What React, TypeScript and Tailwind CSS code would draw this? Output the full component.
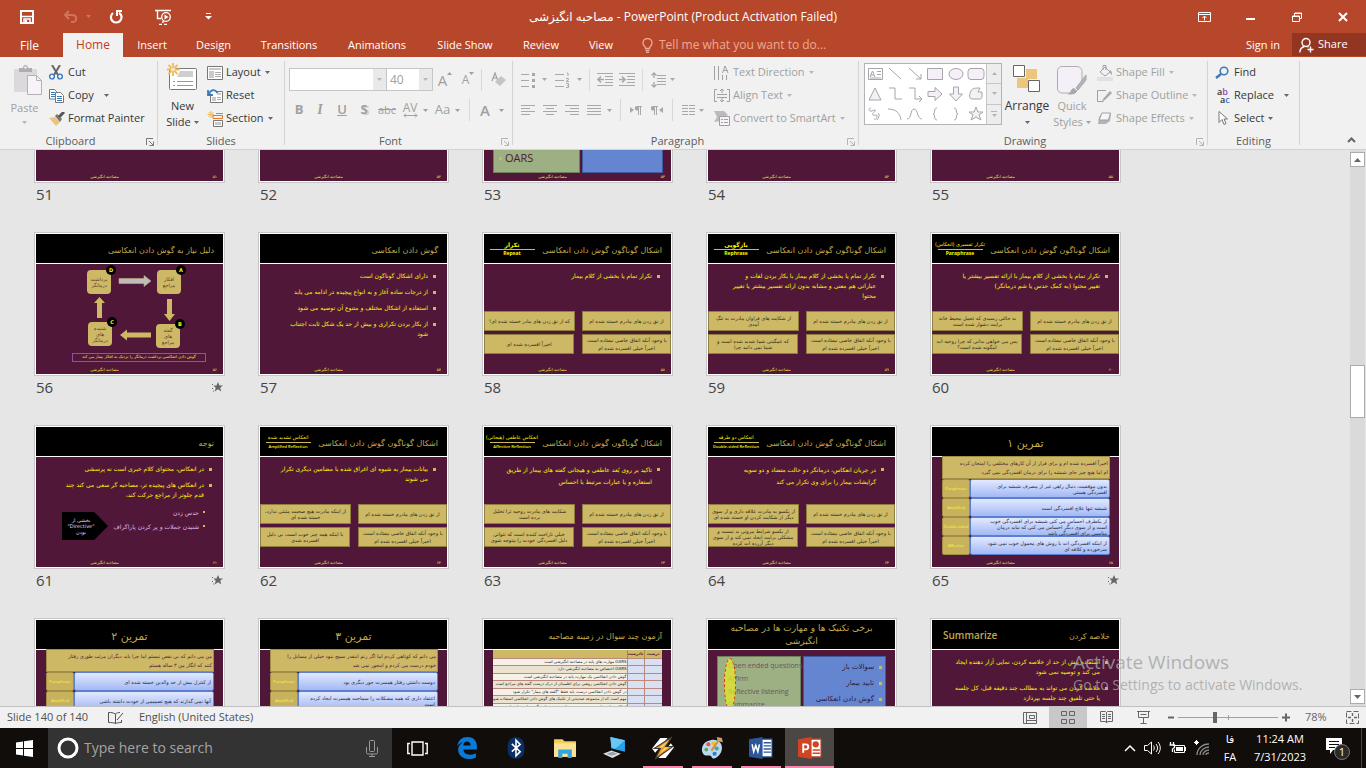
import { ReactNode } from 'react';

const SLIDE_FONT = "font-['DejaVu_Sans','Noto_Sans',sans-serif]";
const FOOTER = 'مصاحبه انگیزشی';

/* ---------- small helpers ---------- */

interface SvgProps {
  w: number;
  h: number;
  children: ReactNode;
  className?: string;
}

function Svg({ w, h, children, className = '' }: SvgProps) {
  return (
    <svg
      width={w}
      height={h}
      viewBox={`0 0 ${w} ${h}`}
      fill="none"
      stroke="currentColor"
      className={`shrink-0 ${className}`}
      aria-hidden="true"
    >
      {children}
    </svg>
  );
}

function Caret({ className = '' }: { className?: string }) {
  return (
    <Svg w={5} h={3} className={className}>
      <path d="M0 0h5L2.5 3z" fill="currentColor" stroke="none" />
    </Svg>
  );
}

function CaretButton({ label, className = '' }: { label: string; className?: string }) {
  return (
    <button aria-label={label} className={`flex w-2 items-center justify-center ${className}`}>
      <Caret />
    </button>
  );
}

function Tool({ label, className = 'w-[22px]', children }: { label: string; className?: string; children: ReactNode }) {
  return (
    <button aria-label={label} className={`flex shrink-0 items-center justify-center ${className}`}>
      {children}
    </button>
  );
}

function Divider({ className = '' }: { className?: string }) {
  return <span className={`h-[22px] w-px shrink-0 bg-[#d8d8d8] ${className}`} />;
}

/* ---------- title bar + tabs ---------- */

function TitleBar() {
  return (
    <header className="grid h-[33px] shrink-0 grid-cols-[1fr_auto_1fr] items-center">
      <div className="flex items-center pl-5">
        <button aria-label="Save">
          <Svg w={14} h={14}>
            <path d="M1 1h12v12H1z" strokeWidth="2" />
            <path d="M2 6.500h10M4 13v-4h6v4" strokeWidth="1.500" />
            <path d="M5 10h2v3H5z" fill="currentColor" stroke="none" />
          </Svg>
        </button>
        <button aria-label="Undo" className="ml-[29px] text-[#d0745d]">
          <Svg w={15} h={13}>
            <path d="M6 1L2 5l4 4M2 5h7c6 0 5 7 1 7H8" strokeWidth="2" />
          </Svg>
        </button>
        <Caret className="ml-2 text-[#d0745d]" />
        <button aria-label="Redo" className="ml-[18px]">
          <Svg w={14} h={14}>
            <path d="M4 3a5.300 5.300 0 1 0 6-.3" strokeWidth="2.200" />
            <path d="M7 1h6M8 0v6" strokeWidth="2" />
          </Svg>
        </button>
        <button aria-label="Start From Beginning" className="ml-8">
          <Svg w={17} h={16}>
            <path d="M0 1.500h16M2.500 2v7.500H6M8 12v2M4 15.500h3M9 15.500h3" strokeWidth="1.400" />
            <circle cx="11" cy="8" r="4.300" strokeWidth="1.300" />
            <path d="M9.500 5.500v5l4-2.500z" fill="currentColor" stroke="none" />
          </Svg>
        </button>
        <button aria-label="Customize Quick Access Toolbar" className="ml-[33px]">
          <Svg w={7} h={7}>
            <path d="M1 .5h5" />
            <path d="M0 3h7L3.500 6.500z" fill="currentColor" stroke="none" />
          </Svg>
        </button>
      </div>
      <h1 className="text-xs">مصاحبه انگیزشی - PowerPoint (Product Activation Failed)</h1>
      <div className="flex items-center justify-end">
        <button aria-label="Ribbon Display Options" className="flex w-[46px] justify-center">
          <Svg w={13} h={10}>
            <path d="M.5.5h12v9H.5zM.5 2.500h12M6.500 8.500V4.500M4.500 6l2-2 2 2" />
          </Svg>
        </button>
        <button aria-label="Minimize" className="flex w-[46px] justify-center">
          <Svg w={9} h={10}>
            <path d="M0 7h9" strokeWidth="2" />
          </Svg>
        </button>
        <button aria-label="Restore Down" className="flex w-[47px] justify-center">
          <Svg w={10} h={10}>
            <path d="M.5 4h7v5.500h-7zM.5 4.500h7M2.500 4V1h7v5.500h-2M2.500 1.500h7" />
          </Svg>
        </button>
        <button aria-label="Close" className="flex w-[46px] justify-center">
          <Svg w={10} h={10}>
            <path d="M1 1l8 8M9 1L1 9" strokeWidth="2" />
          </Svg>
        </button>
      </div>
    </header>
  );
}

const TABS = [
  { name: 'Insert', width: 'w-[58px]' },
  { name: 'Design', width: 'w-[65px]' },
  { name: 'Transitions', width: 'w-[86px]' },
  { name: 'Animations', width: 'w-[90px]' },
  { name: 'Slide Show', width: 'w-[86px]' },
  { name: 'Review', width: 'w-[66px]' },
  { name: 'View', width: 'w-[54px]' },
];

function TabBar() {
  return (
    <nav className="flex h-6 shrink-0 text-[11px]">
      <button className="w-[59px] pt-px text-xs">File</button>
      <button className="ml-1 w-[60px] bg-[#f1f1f1] text-xs text-[#c43e1c]">Home</button>
      {TABS.map((tab) => (
        <button key={tab.name} className={`whitespace-nowrap ${tab.width}`}>
          {tab.name}
        </button>
      ))}
      <button className="ml-[14px] flex items-center gap-1.5 text-xs text-[#eda996]">
        <Svg w={11} h={15}>
          <path d="M3.500 10.500C3.500 8 1 8 1 5a4.500 4.500 0 0 1 9 0c0 3-2.500 3-2.500 5.500zM3.500 12.500h4M4 14.500h3" strokeWidth="1.300" />
        </Svg>
        Tell me what you want to do...
      </button>
      <button className="ml-auto w-14 pl-0.5">Sign in</button>
      <button className="mb-px ml-0.5 flex w-[74px] items-center gap-1 bg-[#923622] pl-[7px]">
        <Svg w={15} h={16}>
          <circle cx="7" cy="5.500" r="4" strokeWidth="1.400" />
          <path d="M.8 15.500C1 12 3 10 5.500 9.500M8.500 9.500l1 .5M11.500 9.500v6M8.500 12.500h6" strokeWidth="1.400" />
        </Svg>
        Share
      </button>
    </nav>
  );
}

/* ---------- ribbon ---------- */

interface GroupProps {
  label: string;
  className: string;
  launcher?: 'on' | 'off';
  children: ReactNode;
}

function Group({ label, className, launcher, children }: GroupProps) {
  return (
    <>
      <section className={`flex shrink-0 flex-col pt-1 ${className}`}>
        <div className="flex h-[72px]">{children}</div>
        <div className="flex h-4 items-center">
          <h2 className="flex-1 text-center text-[11px] text-[#5c5c5c]">{label}</h2>
          {launcher && (
            <button
              aria-label={`${label} settings`}
              className={`flex w-4 justify-end pt-0.5 pr-[3px] ${launcher === 'on' ? 'text-[#777]' : 'text-[#b4b4b4]'}`}
            >
              <Svg w={8} h={8}>
                <path d="M.5 7V.5H7M3 3l4 4M7.500 3.500v4h-4" />
              </Svg>
            </button>
          )}
        </div>
      </section>
      <span className="my-1 w-px shrink-0 bg-[#d4d4d4]" />
    </>
  );
}

function RibbonItem({ icon, text, caret, off }: { icon: ReactNode; text: string; caret?: string; off?: boolean }) {
  return (
    <button className={`flex h-[23px] items-center whitespace-nowrap ${off ? 'text-[#a0a0a0]' : 'text-[#363636]'}`}>
      <span className="flex w-[19px] items-center">{icon}</span>
      {text}
      {caret && <Caret className={`${caret} ${off ? 'text-[#b8b8b8]' : 'text-[#666]'}`} />}
    </button>
  );
}

const lines = (ys: number[], x1: number, x2: number) => ys.map((y) => `M${x1} ${y}H${x2}`).join('');

function Clipboard() {
  return (
    <Group label="Clipboard" className="w-[157px]" launcher="on">
      <button className="flex w-[49px] flex-col items-center pt-1 text-[#a0a0a0]">
        <Svg w={30} h={31} className="ml-1.5">
          <path d="M1 4h23v23H1z" fill="#dcd9dc" stroke="none" />
          <path d="M6 3h4c0-4 5-4 5 0h4v4H6z" fill="#adadad" stroke="none" />
          <circle cx="12.500" cy="2.500" r="1.200" fill="#f1f1f1" stroke="none" />
          <path d="M14.500 10.500h9l5 5v14h-14z" fill="#f7f3f9" stroke="#b5b0b7" />
          <path d="M23.500 10.500v5h5" stroke="#b5b0b7" />
        </Svg>
        <span className="mt-1 leading-4">Paste</span>
        <Caret className="mt-[5px] text-[#b8b8b8]" />
      </button>
      <div className="flex flex-col">
        <RibbonItem
          text="Cut"
          icon={
            <Svg w={14} h={15}>
              <path d="M3 0l6 10M11 0L5 10" stroke="#666" strokeWidth="2" />
              <circle cx="3" cy="11.500" r="2.400" stroke="#3d7ab8" strokeWidth="1.400" />
              <circle cx="11" cy="11.500" r="2.400" stroke="#3d7ab8" strokeWidth="1.400" />
            </Svg>
          }
        />
        <RibbonItem
          text="Copy"
          caret="ml-[10px]"
          icon={
            <Svg w={15} h={14}>
              <path d="M.5.5h5l2 2V10h-7z" fill="#fff" stroke="#777" />
              <path d={lines([3.5, 5.5, 7.5], 2, 6)} stroke="#3d7ab8" />
              <path d="M6.500 3.500h5l3 3v7h-8z" fill="#fff" stroke="#777" />
              <path d={lines([7.5, 9.5, 11.5], 8, 13)} stroke="#3d7ab8" />
            </Svg>
          }
        />
        <RibbonItem
          text="Format Painter"
          icon={
            <Svg w={16} h={14}>
              <path d="M0 6l6-1 5 5-4 4z" fill="#ecc47c" stroke="none" />
              <path d="M6 4l2-2 5 5-2 3z" fill="#777" stroke="none" />
              <path d="M10 5l5-5" stroke="#555" strokeWidth="3" />
            </Svg>
          }
        />
      </div>
    </Group>
  );
}

function Slides() {
  return (
    <Group label="Slides" className="w-[126px]">
      <button className="flex w-[49px] flex-col items-center pt-0.5 text-[#363636]">
        <Svg w={31} h={28}>
          <rect x="2.500" y="5.500" width="27" height="21" rx="1" fill="#fff" stroke="#777" />
          <path d="M13 8h13v6H10z" fill="#cfcfcf" stroke="none" />
          <path d="M6 18.500h2M10 18.500h16M6 22.500h2M10 22.500h16" stroke="#999" />
          <path d="M6 0v13M0 6.500h12.500M1.500 2l9 9M10.500 2l-9 9" stroke="#efbb5c" strokeWidth="1.800" />
          <circle cx="6" cy="6.500" r="2.500" fill="#f8e6c0" stroke="#efbb5c" />
        </Svg>
        <span className="mt-[7px] leading-4">New</span>
        <span className="flex items-center gap-[3px] leading-4">
          Slide <Caret className="text-[#666]" />
        </span>
      </button>
      <div className="flex flex-col">
        <RibbonItem
          text="Layout"
          caret="ml-1"
          icon={
            <Svg w={16} h={14}>
              <path d="M.5.5h15v13H.5z" fill="#fff" stroke="#777" />
              <path d="M2 2h12v2H2zM2 5h5v7H2z" fill="#c9c9c9" stroke="none" />
              <path d={lines([6.5, 8.5, 10.5], 8, 14)} stroke="#aaa" />
            </Svg>
          }
        />
        <RibbonItem
          text="Reset"
          icon={
            <Svg w={16} h={14}>
              <path d="M3.500 4.500V13.500h12v-11h-6" fill="#fff" stroke="#777" />
              <path d="M5 8h4v4H5zM10 4h4v2h-4z" fill="#c9c9c9" stroke="none" />
              <path d={lines([8.5, 10.5], 10, 14)} stroke="#aaa" />
              <path d="M1 1v5h5M1.500 5.500C4 0 8 0 10.500 4" stroke="#3d7ab8" strokeWidth="1.800" />
            </Svg>
          }
        />
        <RibbonItem
          text="Section"
          caret="ml-1"
          icon={
            <Svg w={16} h={16}>
              <path d="M4 0v7M.5 3.500H7M1.500 1l5 5M6.500 1l-5 5" stroke="#efbb5c" />
              <path d="M9 2.500h7M6 4.500h9.500v3H6z" stroke="#e8762c" />
              <path d="M6.500 9.500h9v6h-9z" fill="#fff" stroke="#777" />
              <path d="M8 11h6v3H8z" fill="#c9c9c9" stroke="none" />
            </Svg>
          }
        />
      </div>
    </Group>
  );
}

function FontGroup() {
  return (
    <Group label="Font" className="w-[227px]" launcher="off">
      <div className="pt-[7px] pl-1 text-[#a0a0a0]">
        <div className="flex h-[23px] items-center">
          <div className="flex h-[23px] w-[98px] border border-[#c6c6c6] bg-white">
            <input aria-label="Font" className="w-0 flex-1 px-1 outline-none" />
            <button aria-label="Font list" className="flex w-[13px] items-center justify-center bg-[#e9e9e9] text-[#b8b8b8]">
              <Caret />
            </button>
          </div>
          <div className="flex h-[23px] w-[46px] border border-l-0 border-[#c6c6c6] bg-white">
            <input aria-label="Font size" defaultValue="40" className="w-0 flex-1 pl-[3px] text-xs outline-none" />
            <button aria-label="Font size list" className="flex w-[13px] items-center justify-center bg-[#e9e9e9] text-[#b8b8b8]">
              <Caret />
            </button>
          </div>
          <Tool label="Increase Font Size" className="w-6">
            <span className="text-[15px] leading-5">A</span>
            <Svg w={5} h={3} className="-mt-3">
              <path d="M0 3h5L2.500 0z" fill="currentColor" stroke="none" />
            </Svg>
          </Tool>
          <Tool label="Decrease Font Size">
            <span className="text-xs leading-5">A</span>
            <Caret className="-mt-3" />
          </Tool>
          <Divider className="ml-0.5" />
          <Tool label="Clear All Formatting" className="ml-[5px] w-[22px]">
            <Svg w={15} h={15}>
              <path d="M1 9L4 1l3 8M2 6h4" strokeWidth="1.200" />
              <path d="M4 10l6-6 5 4-6 6z" fill="#c4c4c4" stroke="none" />
            </Svg>
          </Tool>
        </div>
        <div className="mt-2 flex h-[22px] items-center text-[13px]">
          <Tool label="Bold" className="w-5">
            <b>B</b>
          </Tool>
          <Tool label="Italic">
            <i className="font-['Liberation_Serif',serif] text-sm font-bold">I</i>
          </Tool>
          <Tool label="Underline">
            <span className="font-semibold underline">U</span>
          </Tool>
          <Tool label="Text Shadow">
            <b className="[text-shadow:2px_1px_1px_#ccc]">S</b>
          </Tool>
          <Tool label="Strikethrough" className="w-6">
            <s className="text-[11px]">abc</s>
          </Tool>
          <Tool label="Character Spacing" className="w-[22px] flex-col">
            <span className="text-xs leading-[10px]">AV</span>
            <Svg w={15} h={5}>
              <path d="M1 2.500h13M3 .5l-2 2 2 2M12 .5l2 2-2 2" />
            </Svg>
          </Tool>
          <CaretButton label="Character Spacing options" />
          <Tool label="Change Case" className="ml-[3px] w-[21px]">
            Aa
          </Tool>
          <CaretButton label="Change Case options" />
          <Divider className="ml-2" />
          <Tool label="Font Color" className="ml-[5px] w-5">
            <span className="text-[15px] font-semibold">A</span>
          </Tool>
          <CaretButton label="Font Color options" className="ml-0.5" />
        </div>
      </div>
    </Group>
  );
}

function Paragraph() {
  return (
    <Group label="Paragraph" className="w-[345px]" launcher="off">
      <div className="w-[201px] pt-[7px] pl-1 text-[#a8a8a8]">
        <div className="flex h-[23px] items-center">
          <Tool label="Bullets">
            <Svg w={14} h={16}>
              <path d={lines([2.5, 8.5, 14.5], 0, 8)} />
              <path d="M11 1h3v3h-3zM11 7h3v3h-3zM11 13h3v3h-3z" fill="currentColor" stroke="none" />
            </Svg>
          </Tool>
          <CaretButton label="Bullets options" className="ml-px" />
          <Tool label="Numbering" className="ml-[3px] w-[22px]">
            <Svg w={15} h={16}>
              <path d={lines([2.5, 8.5, 14.5], 0, 9)} />
              <path d="M12 1h1v3M11 6.500h2.500v1L11 9.500h3M11 11.500h2.500v4H11M12 13.500h1.500" />
            </Svg>
          </Tool>
          <CaretButton label="Numbering options" className="ml-0.5" />
          <Divider className="ml-1.5" />
          <Tool label="Decrease List Level" className="ml-[5px] w-5">
            <Svg w={16} h={13}>
              <path d="M0 .5h16M8 3.500h8M8 6.500h8M8 9.500h8M0 12.500h16" />
              <path d="M7 6.500H1M4 3.500l-3 3 3 3" strokeWidth="1.600" />
            </Svg>
          </Tool>
          <Tool label="Increase List Level" className="ml-0.5 w-5">
            <Svg w={16} h={13}>
              <path d="M0 .5h16M8 3.500h8M8 6.500h8M8 9.500h8M0 12.500h16" />
              <path d="M0 6.500h6M3 3.500l3 3-3 3" strokeWidth="1.600" />
            </Svg>
          </Tool>
          <Divider className="ml-[5px]" />
          <Tool label="Line Spacing" className="ml-1.5 w-[18px]">
            <Svg w={15} h={16}>
              <path d={lines([3.5, 6.5, 9.5, 12.5], 6, 15)} />
              <path d="M3 1v5M.5 3.500L3 1l2.500 2.500M3 10v5M.5 12.500L3 15l2.500-2.500" strokeWidth="1.300" />
            </Svg>
          </Tool>
          <CaretButton label="Line Spacing options" className="ml-px" />
        </div>
        <div className="mt-2 flex h-[22px] items-center">
          <Tool label="Align Left">
            <Svg w={14} h={11}>
              <path d="M0 .5h14M0 3.500h9M0 6.500h14M0 9.500h9" />
            </Svg>
          </Tool>
          <Tool label="Center">
            <Svg w={14} h={11}>
              <path d="M0 .5h14M3 3.500h8M0 6.500h14M3 9.500h8" />
            </Svg>
          </Tool>
          <Tool label="Align Right">
            <Svg w={14} h={11}>
              <path d="M0 .5h14M5 3.500h9M0 6.500h14M5 9.500h9" />
            </Svg>
          </Tool>
          <Tool label="Justify">
            <Svg w={14} h={11}>
              <path d="M0 .5h14M0 3.500h14M0 6.500h14M0 9.500h14" />
            </Svg>
          </Tool>
          <CaretButton label="Justify options" />
          <Divider className="ml-[7px]" />
          <Tool label="Left-to-Right" className="ml-1.5 w-[18px]">
            <Svg w={12} h={9}>
              <path d="M0 1l4 3-4 3zM8 0h-1a2 2 0 0 0 0 4.500h1z" fill="currentColor" stroke="none" />
              <path d="M7 .5h5M8.500 0v9M10.500 0v9" />
            </Svg>
          </Tool>
          <Tool label="Right-to-Left" className="ml-[3px] w-[18px]">
            <Svg w={12} h={9}>
              <path d="M12 1L8 4l4 3zM3 0H2a2 2 0 0 0 0 4.500h1z" fill="currentColor" stroke="none" />
              <path d="M2 .5h5M3.500 0v9M5.500 0v9" />
            </Svg>
          </Tool>
          <Divider className="ml-1.5" />
          <Tool label="Columns" className="ml-1.5 w-[18px]">
            <Svg w={13} h={11}>
              <path d={lines([0.5, 3.5, 6.5, 9.5], 0, 6) + lines([0.5, 3.5, 6.5, 9.5], 7, 13)} />
            </Svg>
          </Tool>
          <CaretButton label="Columns options" />
        </div>
      </div>
      <div className="flex flex-col">
        <RibbonItem
          off
          text="Text Direction"
          caret="ml-1"
          icon={
            <Svg w={16} h={16}>
              <path d="M.5 1v14M4.500 1v14M8.500 10v5M12.500 10v5M8.500 8L11 1l3 7M9.500 5.500h4" />
            </Svg>
          }
        />
        <RibbonItem
          off
          text="Align Text"
          caret="ml-1"
          icon={
            <Svg w={16} h={15}>
              <path d="M3 1.500H.5v12H3M13 1.500h2.500v12H13M3 6.500h10M3 9.500h10" />
              <path d="M8 5V1M6 3l2-2 2 2M8 10v4M6 12l2 2 2-2" />
            </Svg>
          }
        />
        <RibbonItem
          off
          text="Convert to SmartArt"
          caret="ml-1"
          icon={
            <Svg w={16} h={15}>
              <path d="M0 0h10l4 4-4 2H6v4L0 11l3-5z" fill="#bbb" stroke="none" />
              <path d="M5.500 5.500h10v9h-10z" fill="#f7f3f9" />
              <path d="M7 8.500h2M10 8.500h4M7 11.500h2M10 11.500h4" />
            </Svg>
          }
        />
      </div>
    </Group>
  );
}

const SHAPES = [
  'M3.500 4.500h14v11h-14zM5 13l2.500-6L10 13M6 11h3M12 7.500h4M12 10.500h4M5 14h11',
  'M4 4l12 11',
  'M4 4l12 11M16 10v5h-5',
  'M2.500 4.500h15v11h-15z',
  'M3 10a7 5.500 0 1 0 14 0 7 5.500 0 1 0-14 0z',
  'M5 4.500h10a3 3 0 0 1 3 3v5a3 3 0 0 1-3 3H5a3 3 0 0 1-3-3v-5a3 3 0 0 1 3-3z',
  'M10 4l6 12H4z',
  'M4 4h6v11h7',
  'M4 4h6v11h7M14 12l3 3-3 3',
  'M3 7.500h7v-4l7 6.500-7 6.500v-4H3z',
  'M7.500 3v7h-4l6.500 7 6.500-7h-4V3z',
  'M5 7c1-3 5-3 9-3l-2 4h4v4c0 3-1 3-3 3H6c-3 0-3-5-1-8z',
  'M6 4c-4 1-1 4 1 3s4-2 3 0-4 3-2 4 4-1 4 1-1 4-3 3M13 9c3 2-1 7-1 7',
  'M3 5c8 0 12 4 13 11',
  'M2 15c5 0 3-10 7-10s3 10 8 10',
  'M12 4c-4 0-1 6-4 6 3 0 0 6 4 6',
  'M8 4c4 0 1 6 4 6-3 0 0 6-4 6',
  'M10 3l2 5h5l-4 3 2 5-5-3-5 3 2-5-4-3h5z',
];

function Drawing() {
  return (
    <Group label="Drawing" className="w-[348px]" launcher="off">
      <div className="mt-0.5 ml-[5px] flex h-[62px] w-[138px] border border-[#b4b4b4] bg-white">
        <div className="grid w-[121px] grid-cols-6 grid-rows-3 text-[#a8a4aa]">
          {SHAPES.map((d, i) => (
            <button key={i} aria-label={`Shape ${i + 1}`}>
              <Svg w={20} h={20}>
                <path d={d} fill={[3, 4, 5, 6, 9, 10, 11, 17].includes(i) ? '#f5f0f7' : 'none'} />
              </Svg>
            </button>
          ))}
        </div>
        <div className="flex flex-1 flex-col divide-y divide-[#c6c6c6] border-l border-[#c6c6c6] bg-[#ededed] text-[#b4b4b4]">
          <button aria-label="Previous shapes" className="flex flex-1 items-center justify-center">
            <Caret className="rotate-180" />
          </button>
          <button aria-label="Next shapes" className="flex flex-1 items-center justify-center">
            <Caret />
          </button>
          <button aria-label="More shapes" className="flex flex-1 flex-col items-center justify-center gap-0.5">
            <span className="h-px w-[6px] bg-[#b4b4b4]" />
            <Caret />
          </button>
        </div>
      </div>
      <button className="flex w-[50px] flex-col items-center pt-1 text-xs text-[#363636]">
        <Svg w={28} h={28}>
          <path d="M13 4h11v10H13zM4 13h11v10H4z" fill="#ecc67c" stroke="none" />
          <path d="M.5.5h11v11H.5zM15.500 15.500h11v11h-11z" fill="#fff" stroke="#666" />
        </Svg>
        <span className="mt-[5px] leading-4">Arrange</span>
        <Caret className="mt-[7px] text-[#666]" />
      </button>
      <button className="flex w-10 flex-col items-center pt-[5px] text-[#a0a0a0]">
        <Svg w={30} h={30}>
          <path d="M5 .5h15a5 5 0 0 1 5 5V18l-7 9H5a4.500 4.500 0 0 1-4.500-5V5A4.500 4.500 0 0 1 5 .5z" fill="#f5f0f7" stroke="#b0acb2" />
          <path d="M10 28c4 0 3-5 7-6l3 3c-2 4-6 4-10 3z" fill="#a8a8a8" stroke="none" />
          <path d="M19 22L29 9v5l-8 10z" fill="#b4b4b4" stroke="#a8a8a8" />
        </Svg>
        <span className="mt-0.5 leading-4">Quick</span>
        <span className="flex items-center gap-[3px] leading-4">
          Styles <Caret />
        </span>
      </button>
      <div className="ml-[5px] flex flex-col">
        <RibbonItem
          off
          text="Shape Fill"
          caret="ml-1"
          icon={
            <Svg w={16} h={16}>
              <path d="M3 7l5-5 5 5-5 4zM6 5V.5h3V5" fill="#f5f0f7" />
              <path d="M13 5c2 1 2 3 2 5l-3-3z" fill="#a8a8a8" stroke="none" />
              <path d="M0 12h16v4H0z" fill="#e2e0e4" stroke="none" />
            </Svg>
          }
        />
        <RibbonItem
          off
          text="Shape Outline"
          caret="ml-1"
          icon={
            <Svg w={16} h={12}>
              <path d="M9 .5H.5v11h6" />
              <path d="M6 9l7-8 2 2-7 7-3 1z" fill="#a8a8a8" stroke="none" />
            </Svg>
          }
        />
        <RibbonItem
          off
          text="Shape Effects"
          caret="ml-1"
          icon={
            <Svg w={15} h={13}>
              <path d="M5 1h9l-1 8-4 3H1l1-7z" fill="#b4b4b4" stroke="none" />
              <path d="M5 1h8.500l-2 7H2z" fill="#f7f5f8" />
            </Svg>
          }
        />
      </div>
    </Group>
  );
}

function Editing() {
  return (
    <Group label="Editing" className="w-[91px]">
      <div className="flex flex-col pl-[7px]">
        <RibbonItem
          text="Find"
          icon={
            <Svg w={14} h={13}>
              <circle cx="9" cy="5" r="3.800" stroke="#3d7ab8" strokeWidth="1.600" />
              <path d="M6 8l-5 4" stroke="#3d7ab8" strokeWidth="2.400" />
            </Svg>
          }
        />
        <RibbonItem
          text="Replace"
          caret="ml-[10px]"
          icon={
            <span className="flex flex-col text-[9px] leading-[8px] font-semibold">
              <span>
                a<span className="text-[#8b4fb0]">b</span>
              </span>
              <span className="pl-[5px]">
                a<span className="text-[#3d7ab8]">c</span>
              </span>
            </span>
          }
        />
        <RibbonItem
          text="Select"
          caret="ml-1"
          icon={
            <Svg w={10} h={15} className="ml-[3px]">
              <path d="M1 .5v11l3-3 2 5 2-1-2-4.500h3.500z" fill="#fff" stroke="#777" />
            </Svg>
          }
        />
      </div>
    </Group>
  );
}

function Ribbon() {
  return (
    <div className="flex h-[93px] shrink-0 border-b border-[#d2d2d2] bg-[#f1f1f1] text-[11px]">
      <Clipboard />
      <Slides />
      <FontGroup />
      <Paragraph />
      <Drawing />
      <Editing />
      <div className="flex flex-1 items-end justify-end pr-[10px] pb-1.5 text-[#666]">
        <button aria-label="Collapse the Ribbon">
          <Svg w={9} h={6}>
            <path d="M1 5l3.500-3.500L8 5" strokeWidth="2" />
          </Svg>
        </button>
      </div>
    </div>
  );
}

/* ---------- slide thumbnails ---------- */

interface ThumbProps {
  n: number;
  page: string;
  star?: boolean;
  header?: ReactNode;
  children?: ReactNode;
}

function Thumb({ n, page, star, header, children }: ThumbProps) {
  return (
    <figure className="h-[193px] w-[191px]">
      <div className="border border-[#c6c6c6] bg-white p-px">
        <div className={`flex h-[140px] flex-col overflow-hidden bg-[#511738] ${SLIDE_FONT}`}>
          <div className="flex h-[30px] shrink-0 items-center border-b border-white bg-black text-[9px] leading-[13px] text-[#c2a94c]">
            {header}
          </div>
          <div className="min-h-0 flex-1">{children}</div>
          <div className="flex h-[9px] shrink-0 items-center justify-between pr-1.5 text-[4px] text-[#f5e83a]">
            <span className="w-[137px] text-center">{FOOTER}</span>
            <span>{page}</span>
          </div>
        </div>
      </div>
      <figcaption className="flex items-center justify-between px-0.5 text-[15px] leading-[22px] text-[#444]">
        {n}
        {star && (
          <Svg w={11} h={10}>
            <path d="M6 0l1.500 3.500H11L8.200 5.700 9.300 9.500 6 7.300 2.700 9.500l1-3.800L1.500 3.500h3z" fill="#666" stroke="none" />
            <path d="M0 2.500h1M0 6.500h1M1 9h1" stroke="#666" />
          </Svg>
        )}
      </figcaption>
    </figure>
  );
}

function SlideTitle({ children }: { children: ReactNode }) {
  return (
    <h3 dir="rtl" className="flex-1 pt-1 pr-[9px] text-[8px] whitespace-nowrap">
      {children}
    </h3>
  );
}

interface Bullet {
  rows: string[];
}

function Bullets({ items, line = 'leading-[10px]' }: { items: Bullet[]; line?: string }) {
  return (
    <ul dir="rtl" className={`flex flex-col gap-1.5 pt-[7px] pr-[11px] text-[6px] text-[#fff700] ${line}`}>
      {items.map((item) => (
        <li key={item.rows[0]} className="flex gap-[5px] whitespace-nowrap">
          <span className="mt-1 size-[3px] shrink-0 bg-[#cdb866]" />
          <span>
            {item.rows.map((row) => (
              <span key={row} className="block">
                {row}
              </span>
            ))}
          </span>
        </li>
      ))}
    </ul>
  );
}

function Panel({ rows, className = '' }: { rows: string[]; className?: string }) {
  return (
    <div className={`flex h-5 flex-col justify-center border border-[#8f7f3e] bg-[#cdb866] text-center whitespace-nowrap ${className}`}>
      {rows.map((row) => (
        <span key={row}>{row}</span>
      ))}
    </div>
  );
}

interface Reflection {
  page: string;
  fa: string;
  en: string;
  small?: boolean;
  rows: string[];
  first: string[];
  second: string[];
}

const REFLECTIONS: Record<number, Reflection> = {
  58: {
    page: '۵۸',
    fa: 'تکرار',
    en: 'Repeat',
    rows: ['تکرار تمام یا بخشی از کلام بیمار'],
    first: ['که از نق زدن های مادر خسته شده ای!'],
    second: ['اخیراً افسرده شده ای'],
  },
  59: {
    page: '۵۹',
    fa: 'بازگویی',
    en: 'Rephrase',
    rows: ['تکرار تمام یا بخشی از کلام بیمار با بکار بردن لغات و', 'عباراتی هم معنی و مشابه بدون ارائه تفسیر بیشتر یا تغییر', 'محتوا'],
    first: ['از شکایت های فراوان مادرت به تنگ', 'آمدی'],
    second: ['که غمگینی شما شدید شده است و', 'شما نمی دانید چرا'],
  },
  60: {
    page: '۶۰',
    fa: 'تکرار تفسیری (انعکاس)',
    en: 'Paraphrase',
    rows: ['تکرار تمام یا بخشی از کلام بیمار با ارائه تفسیر بیشتر یا', 'تغییر محتوا (به کمک حدس یا شم درمانگر)'],
    first: ['به حالتی رسیدی که تحمل محیط خانه', 'برایت دشوار شده است'],
    second: ['پس می خواهی بدانی که چرا روحیه ات', 'اینگونه شده است؟'],
  },
  62: {
    page: '۶۲',
    fa: 'انعکاس تشدید شده',
    en: 'Amplified Reflection',
    small: true,
    rows: ['بیانات بیمار به شیوه ای اغراق شده با مضامین دیگری تکرار', 'می شوند'],
    first: ['از اینکه مادرت هیچ صحبت مثبتی ندارد،', 'خسته شده ای'],
    second: ['با اینکه همه چیز خوب است، بی دلیل', 'افسرده شدی'],
  },
  63: {
    page: '۶۳',
    fa: 'انعکاس عاطفی (هیجانی)',
    en: 'Affective Reflection',
    small: true,
    rows: ['تاکید بر روی بُعد عاطفی و هیجانی گفته های بیمار از طریق', 'استعاره و یا عبارات مرتبط با احساس'],
    first: ['شکایت های مادرت روحیه ترا تحلیل', 'برده است'],
    second: ['خیلی ناراحت کننده است که نتوانی', 'دلیل افسردگی خودت را متوجه شوی'],
  },
  64: {
    page: '۶۴',
    fa: 'انعکاس دو طرفه',
    en: 'Double-sided Reflection',
    small: true,
    rows: ['در جریان انعکاس، درمانگر دو حالت متضاد و دو سویه', 'گرایشات بیمار را برای وی تکرار می کند'],
    first: ['از یکسو به مادرت علاقه داری و از سوی', 'دیگر از شکایت کردن او خسته شده ای'],
    second: ['از یکسو شرایط بیرونی بد نیست و', 'مشکلی برایت ایجاد نمی کند و از سوی', 'دیگر آزرده ات کرده'],
  },
};

function ReflectionSlide({ n }: { n: number }) {
  const slide = REFLECTIONS[n];
  return (
    <Thumb
      n={n}
      page={slide.page}
      header={
        <>
          <div className="ml-1 flex w-[48px] flex-col items-center whitespace-nowrap text-[#fff700]">
            <span dir="rtl" className={slide.fa.length > 12 ? 'text-[5px] leading-[9px]' : 'text-[6px] leading-[9px] font-bold'}>
              {slide.fa}
            </span>
            <span className="h-px w-[45px] bg-[#cdb866]" />
            <span
              className={
                slide.small
                  ? "font-['Open_Sans',sans-serif] text-[4px] leading-[7px] font-semibold"
                  : "font-['Open_Sans',sans-serif] text-[5px] leading-[7px] font-bold"
              }
            >
              {slide.en}
            </span>
          </div>
          <SlideTitle>اشکال گوناگون گوش دادن انعکاسی</SlideTitle>
        </>
      }
    >
      <div className="h-[47px]">
        <Bullets items={[{ rows: slide.rows }]} line={n > 62 ? 'leading-[12px]' : 'leading-[10px]'} />
      </div>
      <div dir="rtl" className="grid grid-cols-[89px_91px] justify-between gap-y-[3px] text-[5px] leading-[6px] text-[#2f2a18]">
        <Panel rows={['از نق زدن های مادرم خسته شده ام']} />
        <Panel rows={slide.first} />
        <Panel rows={['با وجود آنکه اتفاق خاصی نیفتاده است،', 'اخیراً خیلی افسرده شده ام']} className="leading-[8px]" />
        <Panel rows={slide.second} className="mr-px" />
      </div>
    </Thumb>
  );
}

const LABELS = ['Paraphrase', 'Amplified', 'Double-sided', 'Affective'];

interface ExerciseProps {
  n: number;
  page: string;
  title: string;
  star?: boolean;
  intro: string[];
  answers: string[][];
}

function ExerciseSlide({ n, page, title, star, intro, answers }: ExerciseProps) {
  return (
    <Thumb
      n={n}
      page={page}
      star={star}
      header={
        <h3 dir="rtl" className="flex-1 pt-1 text-center text-[11px]">
          {title}
        </h3>
      }
    >
      <div dir="rtl" className="relative -mt-px mr-[9px] ml-[10px] whitespace-nowrap">
        <p className="flex h-[23px] flex-col justify-center border border-[#a08f45] bg-[#cdb866] px-px text-[5px] leading-[9px] text-[#511738]">
          {intro.map((row) => (
            <span key={row}>{row}</span>
          ))}
        </p>
        {answers.map((rows, i) => (
          <div key={LABELS[i]} className="flex h-[19px]">
            <div className="flex flex-1 flex-col justify-center rounded-xs border border-[#5d7fd0] bg-gradient-to-b from-[#e2e9ff] to-[#a3b9f5] px-0.5 text-[5px] leading-[6px] text-[#222a40]">
              {rows.map((row) => (
                <span key={row}>{row}</span>
              ))}
            </div>
            <div className="flex w-7 items-center justify-center rounded-xs border border-[#a08f45] bg-[#c8b25e] font-['Open_Sans',sans-serif] text-[4px] text-[#fbf63c]">
              {LABELS[i]}
            </div>
          </div>
        ))}
      </div>
    </Thumb>
  );
}

const CYCLE = [
  { key: 'D', place: 'left-[51px] top-[6px]', rows: ['برداشت', 'درمانگر'] },
  { key: 'A', place: 'left-[121px] top-[6px]', rows: ['افکار', 'مراجع'] },
  { key: 'B', place: 'left-[120px] top-[60px]', rows: ['گفته', 'های', 'مراجع'] },
  { key: 'C', place: 'left-[52px] top-[58px]', rows: ['شنیده', 'های', 'درمانگر'] },
];

function CycleSlide() {
  return (
    <Thumb n={56} page="۵۶" star header={<SlideTitle>دلیل نیاز به گوش دادن انعکاسی</SlideTitle>}>
      <div className="relative h-[89px]">
        {CYCLE.map((node) => (
          <div
            key={node.key}
            dir="rtl"
            className={`absolute flex size-6 flex-col items-center justify-center rounded-[4px] bg-[#cdb866] text-[5px] leading-[6px] text-[#5c3a2c] ${node.place}`}
          >
            {node.rows.map((row) => (
              <span key={row}>{row}</span>
            ))}
            <span className="absolute -top-[5px] -right-[5px] flex size-[10px] items-center justify-center rounded-full bg-black text-[5px] font-bold text-[#fdf500]">
              {node.key}
            </span>
          </div>
        ))}
        <Svg w={187} h={89} className="absolute top-0 left-0">
          <path d="M83 14.500h25v-3l7 5.500-7 5.500v-3H83z" fill="#bdbdbd" stroke="#c0ab74" strokeWidth=".6" />
          <path d="M131 35h5v15h3l-5.500 7-5.500-7h3z" fill="#cdb866" stroke="none" />
          <path d="M115 68.500H91v-3L84 71l7 5.500v-3h24z" fill="#cdb866" stroke="none" />
          <path d="M61 54h5V39h3l-5.500-6-5.500 6h3z" fill="#cdb866" stroke="none" />
        </Svg>
      </div>
      <p dir="rtl" className="mr-[17px] ml-9 h-[9px] border border-[#8b55a5] text-center text-[4px] leading-[6px] whitespace-nowrap text-[#fff700]">
        گوش دادن انعکاسی برداشت درمانگر را نزدیک به افکار بیمار می کند
      </p>
    </Thumb>
  );
}

function NoticeSlide() {
  return (
    <Thumb n={61} page="۶۱" star header={<SlideTitle>توجه</SlideTitle>}>
      <Bullets
        items={[
          { rows: ['در انعکاس، محتوای کلام خبری است نه پرسشی'] },
          { rows: ['در انعکاس های پیچیده تر، مصاحبه گر سعی می کند چند', 'قدم جلوتر از مراجع حرکت کند،'] },
        ]}
      />
      <div dir="rtl" className="flex items-start pt-2 pr-[18px]">
        <ul className="flex w-[92px] flex-col gap-1 text-[6px] leading-[10px] whitespace-nowrap text-[#e0b8e6]">
          {['حدس زدن', 'شنیدن جملات و پر کردن پاراگراف'].map((row) => (
            <li key={row} className="flex gap-1">
              <span className="mt-[3px] size-0.5 bg-[#cdb866]" />
              {row}
            </li>
          ))}
        </ul>
        <div className="mt-1 mr-[5px] flex h-7 w-[46px] flex-col justify-center bg-black pr-2 text-center text-[5px] leading-[6px] text-[#e8d5ee] [clip-path:polygon(0_0,70%_0,100%_50%,70%_100%,0_100%)]">
          <span>بخشی از</span>
          <span>&quot;Directive&quot;</span>
          <span>بودن</span>
        </div>
      </div>
    </Thumb>
  );
}

const QUIZ = [
  'OARS مهارت های پایه در مصاحبه انگیزشی است',
  'OARS اختصاص به مصاحبه انگیزشی دارد',
  'گوش دادن انعکاسی یک مهارت پایه در مصاحبه انگیزشی است',
  'گوش دادن انعکاسی روشی برای اطمینان از درک درست گفته های مراجع است',
  'در گوش دادن انعکاسی درست باید فقط "گفته های بیمار" تکرار شود',
  'مهم است که از مجموعه صحیحی از تکنیک های گوش دادن انعکاسی استفاده شود',
  'انعکاس های ساده و پیچیده هر دو برای روشن سازی گفته های مراجع است',
];

function QuizSlide() {
  return (
    <Thumb n={68} page="۶۸" header={<SlideTitle>آزمون  چند سوال در زمینه مصاحبه</SlideTitle>}>
      <table className="ml-[9px] w-[169px] table-fixed border-collapse text-right text-[4px] leading-[6px] whitespace-nowrap text-[#1d1d1d]">
        <thead>
          <tr className="h-2 bg-[#cdb866] text-center text-[#511738]">
            <th className="p-0" aria-label="سوال" />
            <th className="w-[17px] border-l border-[#a08f45] p-0">نادرست</th>
            <th className="w-[18px] border-l border-[#a08f45] p-0">درست</th>
          </tr>
        </thead>
        <tbody>
          {QUIZ.map((row) => (
            <tr key={row} className="h-[7px] border-t border-[#b98a7c] odd:bg-[#f5f1e6] even:h-2 even:bg-[#ebe3cf]">
              <td dir="rtl" className="p-0">
                {row}
              </td>
              <td className="border-l border-[#b98a7c] bg-[#d9e0f2] p-0" />
              <td className="border-l border-[#b98a7c] bg-[#d9e0f2] p-0" />
            </tr>
          ))}
        </tbody>
      </table>
    </Thumb>
  );
}

function SkillsSlide() {
  return (
    <Thumb
      n={69}
      page="۶۹"
      header={
        <h3 dir="rtl" className="flex-1 text-center">
          برخی تکنیک ها و مهارت ها در مصاحبه
          <br />
          انگیزشی
        </h3>
      }
    >
      <div className="flex gap-0.5 px-[9px] pt-1.5">
        <ul className="relative flex h-24 w-[84px] flex-col gap-[3px] border border-[#71805a] bg-[#9cb084] pt-1 pl-[10px] font-['Open_Sans',sans-serif] text-[7px] leading-[10px] whitespace-nowrap text-[#6b5560]">
          <li>Open ended questions</li>
          <li>Affirm</li>
          <li>Reflective listening</li>
          <li>Summarize</li>
          <li aria-hidden="true" className="absolute top-px left-1.5 h-[52px] w-3 rounded-[50%] border border-dashed border-[#e0301c] bg-[#e6ea2a]/75" />
        </ul>
        <ul dir="rtl" className="flex h-24 flex-1 flex-col gap-1.5 border border-[#41599e] bg-[#6486d0] pt-[5px] pr-[3px] text-[7px] leading-[10px] whitespace-nowrap text-[#2f1640]">
          {['سوالات باز', 'تایید بیمار', 'گوش دادن انعکاسی', 'خلاصه کردن'].map((row) => (
            <li key={row} className="flex gap-[5px]">
              <span className="mt-1 size-[3px] bg-[#cdb866]" />
              {row}
            </li>
          ))}
        </ul>
      </div>
    </Thumb>
  );
}

function SummarySlide() {
  return (
    <Thumb
      n={70}
      page="۷۰"
      header={
        <>
          <span className="pt-0.5 pl-[11px] font-['Open_Sans',sans-serif] text-[10px] font-semibold">Summarize</span>
          <SlideTitle>خلاصه کردن</SlideTitle>
        </>
      }
    >
      <Bullets
        items={[
          { rows: ['استفاده بیش از حد از خلاصه کردن، نمایی آزار دهنده ایجاد', 'می کند و توصیه نمی شود'] },
          { rows: ['خلاصه کردن می تواند به مطالب چند دقیقه قبل، کل جلسه', 'یا حتی تلفیق چند جلسه بپردازد'] },
        ]}
      />
    </Thumb>
  );
}

function SlideGrid() {
  return (
    <div className="-mt-[111px] grid grid-cols-[repeat(5,191px)] gap-x-[33px] pl-[34px]">
      <Thumb n={51} page="۵۱" />
      <Thumb n={52} page="۵۲" />
      <Thumb n={53} page="۵۳">
        <div className="flex h-[102px] gap-0.5 pr-2 pl-[9px] text-[#511738]">
          <div className="flex flex-1 items-end gap-[3px] border border-[#71805a] bg-[#9cb084] pb-1.5 pl-[5px]">
            <span className="mb-1.5 size-[3px] bg-[#cdb866]" />
            <span className="font-['Open_Sans',sans-serif] text-[11px] leading-4">OARS</span>
          </div>
          <div className="flex-1 border border-[#41599e] bg-[#6486d0]" />
        </div>
      </Thumb>
      <Thumb n={54} page="۵۴" />
      <Thumb n={55} page="۵۵" />

      <CycleSlide />
      <Thumb n={57} page="۵۷" header={<SlideTitle>گوش دادن انعکاسی</SlideTitle>}>
        <Bullets
          items={[
            { rows: ['دارای اشکال گوناگون است'] },
            { rows: ['از درجات ساده آغاز و به انواع پیچیده در ادامه می یابد'] },
            { rows: ['استفاده از اشکال مختلف و متنوع آن توصیه می شود'] },
            { rows: ['از بکار بردن تکراری و بیش از حد یک شکل ثابت اجتناب', 'شود'] },
          ]}
        />
      </Thumb>
      <ReflectionSlide n={58} />
      <ReflectionSlide n={59} />
      <ReflectionSlide n={60} />

      <NoticeSlide />
      <ReflectionSlide n={62} />
      <ReflectionSlide n={63} />
      <ReflectionSlide n={64} />
      <ExerciseSlide
        n={65}
        page="۶۵"
        star
        title="تمرین ۱"
        intro={['اخیراً افسرده شده ام و برای فرار از آن کارهای مختلفی را امتحان کرده', 'ام اما هیچ چیز جای شیشه را برای درمان افسردگی نمی گیرد']}
        answers={[
          ['بدون موفقیت، دنبال راهی غیر از مصرف شیشه برای', 'افسردگی هستی'],
          ['شیشه تنها علاج افسردگی است'],
          ['از یکطرف احساس می کنی شیشه برای افسردگی خوب', 'است و از سوی دیگر احساس می کنی که نباید درمان', 'مناسبی برای افسردگی باشد'],
          ['از اینکه افسردگی ات با روش های معمول خوب نمی شود', 'سرخورده و کلافه ای'],
        ]}
      />

      <ExerciseSlide
        n={66}
        page="۶۶"
        title="تمرین ۲"
        intro={['من می دانم که بی نقص نیستم اما چرا باید دیگران مرتب طوری رفتار', 'کنند که انگار من ۳ ساله هستم']}
        answers={[['از کنترل بیش از حد والدین خسته شده ای'], ['آنها نمی گذارند که هیچ تصمیمی از خودت داشته باشی']]}
      />
      <ExerciseSlide
        n={67}
        page="۶۷"
        title="تمرین ۳"
        intro={['می دانم که کوتاهی کردم اما اگر زنم اینقدر سمج نبود خیلی از مسایل را', 'خودم درست می کردم و اینجور نمی شد']}
        answers={[['دوست داشتی رفتار همسرت جور دیگری بود'], ['اعتقاد داری که همه مشکلات را سماجت همسرت ایجاد کرده', 'است']]}
      />
      <QuizSlide />
      <SkillsSlide />
      <SummarySlide />
    </div>
  );
}

function ScrollBar() {
  return (
    <div className="mr-px flex w-[15px] shrink-0 flex-col bg-[#dadada] py-0.5 text-[#666]">
      <button aria-label="Scroll up" className="flex h-[15px] items-center justify-center border border-[#ababab] bg-white">
        <Svg w={7} h={4}>
          <path d="M0 4h7L3.500 0z" fill="currentColor" stroke="none" />
        </Svg>
      </button>
      <div className="flex flex-1 flex-col">
        <span className="grow-[198]" />
        <span className="h-[53px] border border-[#ababab] bg-white" />
        <span className="grow-[272]" />
      </div>
      <button aria-label="Scroll down" className="flex h-[15px] items-center justify-center border border-[#ababab] bg-white">
        <Svg w={7} h={4}>
          <path d="M0 0h7L3.500 4z" fill="currentColor" stroke="none" />
        </Svg>
      </button>
    </div>
  );
}

/* ---------- status bar ---------- */

function StatusBar() {
  return (
    <footer className="flex h-[22px] shrink-0 items-center border-t border-[#c0c0c0] bg-[#f1f1f1] pl-[7px] text-[11px] text-[#505050]">
      <span className="w-[101px]">Slide 140 of 140</span>
      <button aria-label="Spelling" className="w-[31px]">
        <Svg w={16} h={12}>
          <path d="M7.500 2v9.500M7.500 2C5 .5 3 .5.500.500v10c2.500 0 5 0 7 1 1-.5 3-1 6-1V8M7.500 2C9 .8 10 .6 12 .5M9 8l6-7" />
        </Svg>
      </button>
      <button>English (United States)</button>
      <div className="ml-auto flex h-full items-center text-[#666]">
        <button aria-label="Normal" className="flex h-full w-[38px] items-center justify-center">
          <Svg w={14} h={12}>
            <path d="M.5.5h13v11H.5zM3.500.5v11M3.500 8.500h10M6.500 3.500h5v3h-5z" />
          </Svg>
        </button>
        <button aria-label="Slide Sorter" className="flex h-full w-[38px] items-center justify-center bg-[#c8c8c8]">
          <Svg w={14} h={13}>
            <path d="M.5.5h5v4h-5zM8.500.5h5v4h-5zM.5 8.500h5v4h-5zM8.500 8.500h5v4h-5z" />
          </Svg>
        </button>
        <button aria-label="Reading View" className="flex h-full w-[38px] items-center justify-center">
          <Svg w={13} h={13}>
            <path d="M.5.500h5l1 1 1-1h5v10h-5l-1 1.500-1-1.500h-5zM6.500 1v11M2 3.500h3M2 5.500h3M2 7.500h3M8 3.500h3M8 5.500h3M8 7.500h3" />
          </Svg>
        </button>
        <button aria-label="Slide Show" className="flex h-full w-[37px] items-center justify-center">
          <Svg w={13} h={13}>
            <path d="M0 .5h13M1.500 1v5.500h10V1M6.500 7v5M3.500 12.500h6M3.500 3.500h6" />
          </Svg>
        </button>
        <button aria-label="Zoom out" className="ml-1.5">
          <Svg w={6} h={9}>
            <path d="M0 4.500h6" strokeWidth="2" />
          </Svg>
        </button>
        <label className="relative mx-1 flex items-center">
          <span className="sr-only">Zoom</span>
          <input
            type="range"
            min="0"
            max="100"
            defaultValue="36"
            className="h-px w-[100px] appearance-none bg-[#a0a0a0] [&::-webkit-slider-thumb]:h-[11px] [&::-webkit-slider-thumb]:w-1 [&::-webkit-slider-thumb]:appearance-none [&::-webkit-slider-thumb]:bg-[#666]"
          />
          <span className="absolute left-1/2 h-[5px] w-px bg-[#a0a0a0]" />
        </label>
        <button aria-label="Zoom in">
          <Svg w={8} h={9}>
            <path d="M0 4.500h8M4 .5v8" strokeWidth="2" />
          </Svg>
        </button>
        <button className="ml-[15px] w-[41px] text-left">78%</button>
        <button aria-label="Fit slide to current window" className="mr-[7px]">
          <Svg w={13} h={13}>
            <path d="M.5.5h12v12H.5z" strokeDasharray="5 2" />
            <path d="M6.500 2v3M6.500 8v3M2 6.500h3M8 6.500h3" strokeWidth="1.400" />
          </Svg>
        </button>
      </div>
    </footer>
  );
}

/* ---------- windows taskbar ---------- */

const APPS: { name: string; open?: boolean; active?: boolean; icon: ReactNode }[] = [
  {
    name: 'Edge',
    icon: (
      <path
        d="M2 10C3 4 7 1 12 1c6 0 9 4 9 9v3H8c0 3 3 5 6 5 2 0 4-.5 6-1.500v4C18 21.500 16 22 13 22 7 22 3 18 3 13c0-3 2-5.500 5-7-3 .5-5 2-6 4zm6-1h7c0-5-7-5-7 0z"
        fill="#0a7ad8"
      />
    ),
  },
  {
    name: 'Bluetooth',
    icon: (
      <>
        <rect x="3.500" y="1" width="16" height="21" rx="8" fill="#0b2f63" />
        <path d="M7.500 7.500l8 7.500-4 4V4l4 4-8 7" stroke="#fff" strokeWidth="1.500" />
      </>
    ),
  },
  {
    name: 'File Explorer',
    icon: (
      <>
        <path d="M1 3h8l2 2h11v15H1z" fill="#f2cd5c" />
        <path d="M1 7h21v13H1z" fill="#fce296" />
        <path d="M5 21v-8h13v8h-4v-4H9v4z" fill="#35a3dc" />
      </>
    ),
  },
  {
    name: 'This PC',
    icon: (
      <>
        <path d="M8 1l14 3v11L9 12z" fill="#27a2ea" />
        <path d="M8 1l14 3-9 8-4-1z" fill="#69c6f5" />
        <path d="M1 17l8-3 9 3-8 4z" fill="#dfe4e8" />
        <path d="M4 17l6-2 5 2-6 2z" fill="#98a2aa" />
      </>
    ),
  },
  {
    name: 'Winamp',
    open: true,
    icon: (
      <>
        <path d="M1 12L9 2h7L4 16zM22 11l-8 10H7L19 7z" fill="#fff" />
        <path d="M20 1L3 12h6L4 22l17-12h-7z" fill="#f39a1d" stroke="#3a3a3a" />
        <path d="M17 4L8 11h5l-5 6 9-6h-6z" fill="#ffd36b" />
      </>
    ),
  },
  {
    name: 'Paint',
    open: true,
    icon: (
      <>
        <path d="M10 4C3 5 0 12 3 17c2 3 5 1 7 2s1 4 5 2c6-3 8-11 4-15-2-2-5-3-9-2z" fill="#b9d9ee" />
        <circle cx="8" cy="8" r="2" fill="#e55b45" />
        <circle cx="13" cy="7" r="1.800" fill="#efb93c" />
        <circle cx="6" cy="13" r="1.800" fill="#58a85a" />
        <circle cx="16" cy="12" r="2" fill="#4aa3a0" />
        <circle cx="14" cy="17" r="2" fill="#2f7fc4" />
        <path d="M11 14L18 4" stroke="#d98e3a" strokeWidth="2" />
        <path d="M16 1l5 1 1 4-5-1z" fill="#caa06a" />
      </>
    ),
  },
  {
    name: 'Word',
    open: true,
    icon: (
      <>
        <path d="M12 3h10v17H12z" fill="#fff" stroke="#2b579a" />
        <path d="M14 6.500h7M14 9.500h7M14 12.500h7M14 15.500h7" stroke="#2b579a" strokeWidth="1.300" />
        <path d="M0 3l13-2v21L0 20z" fill="#2b579a" />
        <path d="M3 8l1.500 7L6.500 9l2 6L10 8" stroke="#fff" strokeWidth="1.500" />
      </>
    ),
  },
  {
    name: 'PowerPoint',
    open: true,
    active: true,
    icon: (
      <>
        <path d="M12 3h10v17H12z" fill="#fff" stroke="#d04423" />
        <path d="M14 13.500h7M14 16.500h7" stroke="#d04423" strokeWidth="1.400" />
        <circle cx="17" cy="8" r="3" fill="#d04423" />
        <path d="M0 3l13-2v21L0 20z" fill="#d04423" />
        <path d="M5 16V8h2.500a2.300 2.300 0 0 1 0 4.800H5" stroke="#fff" strokeWidth="1.800" />
      </>
    ),
  },
];

function Taskbar() {
  return (
    <footer className="flex h-10 shrink-0 items-stretch bg-[#100d0b] text-white">
      <button aria-label="Start" className="flex w-12 items-center justify-center">
        <Svg w={17} h={17}>
          <path d="M0 2.500l7-1V8H0zM8 1.300L17 0v8H8zM0 9h7v6.500l-7-1zM8 9h9v8l-9-1.300z" fill="#fff" stroke="none" />
        </Svg>
      </button>
      <label className="flex w-[344px] items-center bg-[#333] pl-[9px]">
        <span className="sr-only">Search</span>
        <Svg w={22} h={22}>
          <circle cx="11" cy="11" r="9" strokeWidth="3" />
        </Svg>
        <input placeholder="Type here to search" className="ml-[5px] w-0 flex-1 text-sm outline-none placeholder:text-[#a3a3a3]" />
        <Svg w={12} h={17} className="mr-[14px] text-[#9a9a9a]">
          <rect x="3.500" y=".5" width="5" height="11" rx="1" />
          <path d="M.5 7v5.500a1.500 1.500 0 0 0 1.500 1.500h8a1.500 1.500 0 0 0 1.500-1.500V7M6 14v3M3 16.500h6" />
        </Svg>
      </label>
      <button aria-label="Task View" className="flex w-[50px] items-center justify-center">
        <Svg w={21} h={15}>
          <path d="M5 1h11v13H5z" strokeWidth="1.400" />
          <path d="M3 2.500H.800v10H3M18 2.500h2.200v10H18" strokeWidth="1.400" />
        </Svg>
      </button>
      {APPS.map((app) => (
        <button
          key={app.name}
          aria-label={app.name}
          className={`flex w-[49px] flex-col items-center pt-2 ${app.active ? 'bg-[#4b4744]' : ''}`}
        >
          <svg width="24" height="24" viewBox="0 0 23 23" fill="none" aria-hidden="true">
            {app.icon}
          </svg>
          {app.open && <span className={`mt-auto h-0.5 bg-[#f787b0] ${app.active ? 'w-full' : 'w-10'}`} />}
        </button>
      ))}
      <div className="ml-auto flex items-center">
        <button aria-label="Show hidden icons" className="mr-2">
          <Svg w={12} h={8}>
            <path d="M1 7l5-5 5 5" strokeWidth="1.500" />
          </Svg>
        </button>
        <button aria-label="Volume" className="mr-2">
          <Svg w={17} h={14}>
            <path d="M.5 4.500h3l4-3.500v12l-4-3.500h-3zM9.500 4.500c1 1.500 1 3.500 0 5M12 3c2 2.500 2 5.500 0 8M14 1c3 3.500 3 8.500 0 12" />
          </Svg>
        </button>
        <button aria-label="Battery" className="mr-2">
          <Svg w={17} h={12}>
            <path d="M4.500 3.500h11v7h-10v-3M16.500 5v4" />
            <path d="M7 5h7v4H7z" fill="currentColor" stroke="none" />
            <path d="M1.500 0v3M4.500 0v3M.5 3h5v2.500l-2 1.500v3" strokeWidth="1.300" />
          </Svg>
        </button>
        <button aria-label="Network" className="mr-2">
          <Svg w={16} h={16}>
            <path d="M2.500 0v5M0 2.500h5M1 1l3 3M4 1L1 4" />
            <g stroke="#8a8a8a" strokeWidth="1.300">
              <path d="M3 15C3 9 8 4 15 4M6 15c0-4 4-8 9-8M9 15c0-3 3-5 6-5M12 15c0-1 1-2 3-2" />
            </g>
          </Svg>
        </button>
        <button className="flex w-[24px] flex-col items-center text-[11px] leading-[18px]">
          <span>فا</span>
          <span>FA</span>
        </button>
        <time className="ml-[10px] flex w-[56px] flex-col items-center text-[11px] leading-[18px] whitespace-nowrap">
          <span>11:24 AM</span>
          <span>7/31/2023</span>
        </time>
        <button aria-label="1 new notification" className="relative mr-[11px] ml-[18px]">
          <Svg w={24} h={24}>
            <path d="M0 2h16v12H7l-3 4v-4H0z" fill="#fff" stroke="none" />
            <path d="M3 5.500h10M3 8.500h10M3 11.500h6" stroke="#100d0b" />
          </Svg>
          <span className="absolute top-2 left-2 flex size-4 items-center justify-center rounded-full border border-[#777] bg-[#2a2a2a] text-[11px] leading-4">
            1
          </span>
        </button>
        <span className="mr-1 h-10 w-px bg-[#4a4744]" />
      </div>
    </footer>
  );
}

export default function App() {
  return (
    <div className="flex h-screen flex-col overflow-hidden bg-[#b7472a] font-['Open_Sans','DejaVu_Sans',sans-serif] text-white">
      <TitleBar />
      <TabBar />
      <Ribbon />
      <main className="relative flex min-h-0 flex-1 bg-[#e6e6e6]">
        <div className="min-w-0 flex-1 overflow-hidden">
          <SlideGrid />
        </div>
        <ScrollBar />
        <div className="pointer-events-none absolute right-[57px] bottom-[11px] w-[236px] whitespace-nowrap text-[#a3a3a3]/80">
          <p className="text-[19px] leading-[26px]">Activate Windows</p>
          <p className="text-sm leading-5">Go to Settings to activate Windows.</p>
        </div>
      </main>
      <StatusBar />
      <Taskbar />
    </div>
  );
}
